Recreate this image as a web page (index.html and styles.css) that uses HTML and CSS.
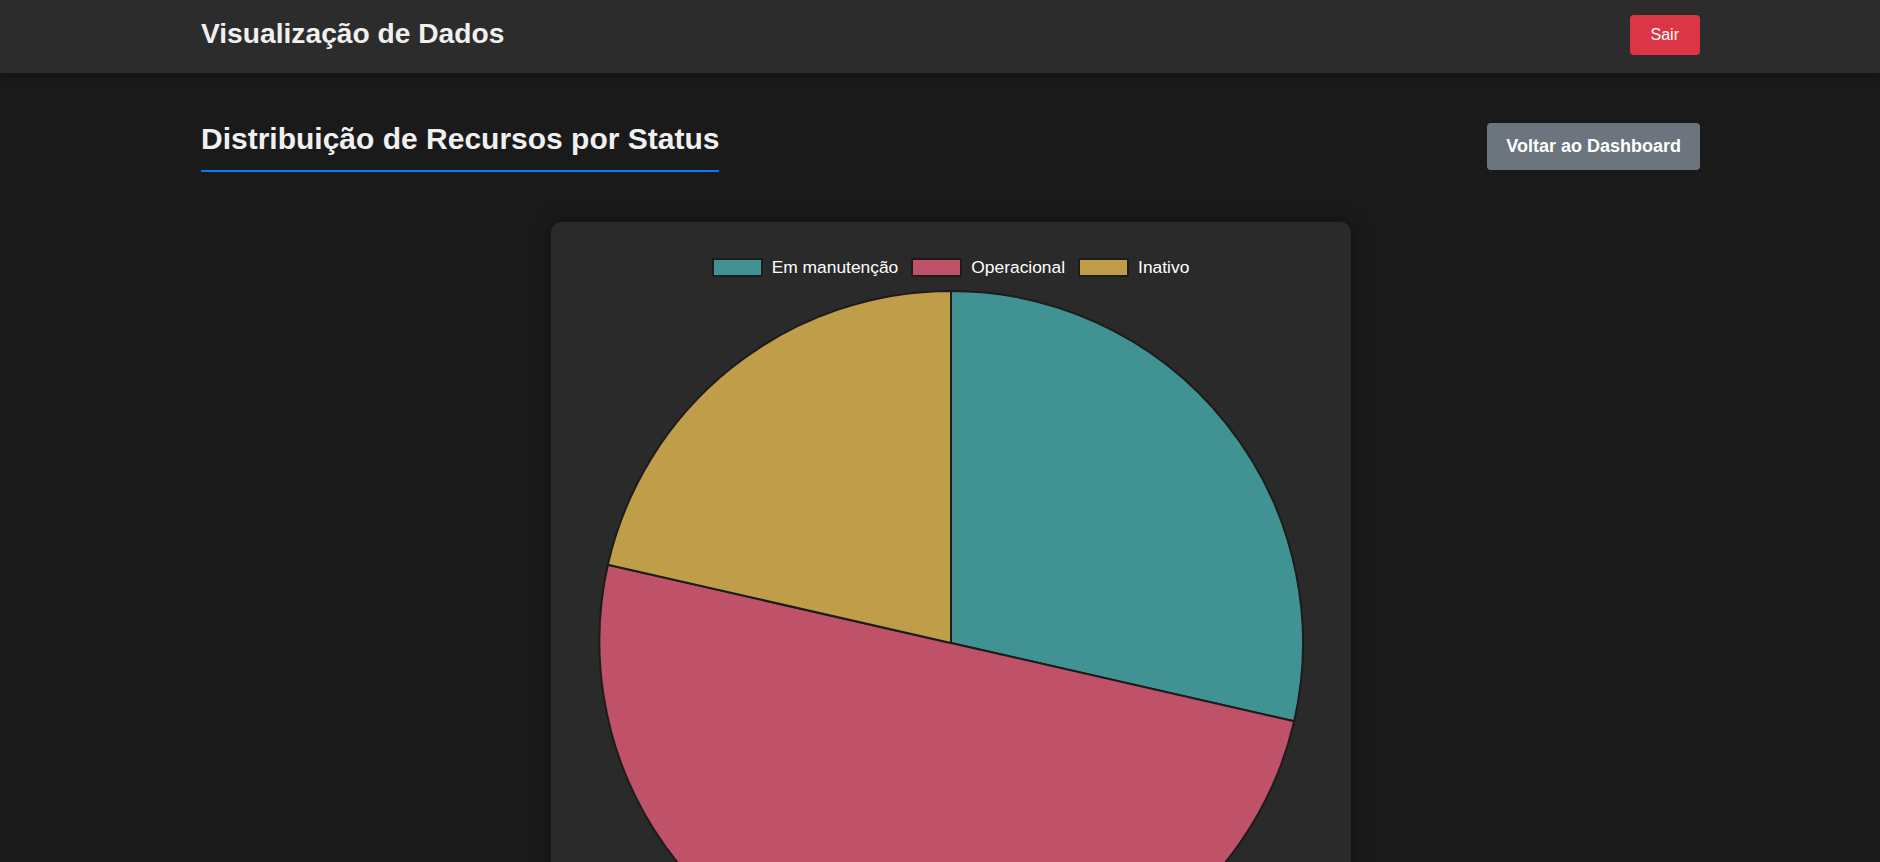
FILE: index.html
```html
<!DOCTYPE html>
<html lang="pt-BR">
<head>
<meta charset="utf-8">
<title>Visualização de Dados</title>
<link rel="stylesheet" href="styles.css">
</head>
<body>
<header class="topbar">
  <div class="container topbar-inner">
    <h1 class="brand">Visualização de Dados</h1>
    <button class="btn btn-danger">Sair</button>
  </div>
</header>
<main class="container main">
  <div class="title-row">
    <h2 class="page-title">Distribuição de Recursos por Status</h2>
    <button class="btn btn-secondary">Voltar ao Dashboard</button>
  </div>
  <section class="chart-card">
    <div class="legend">
      <div class="legend-item"><span class="swatch swatch-teal"></span><span class="legend-label">Em manutenção</span></div>
      <div class="legend-item"><span class="swatch swatch-red"></span><span class="legend-label">Operacional</span></div>
      <div class="legend-item"><span class="swatch swatch-yellow"></span><span class="legend-label">Inativo</span></div>
    </div>
    <svg class="pie" width="760" height="720" viewBox="0 0 760 720">
      <path d="M380 358 L380 6 A352 352 0 0 1 723.17 436.33 Z" fill="#419393" stroke="#1c1c1c" stroke-width="2" stroke-linejoin="round"/>
      <path d="M380 358 L723.17 436.33 A352 352 0 0 1 36.83 279.67 Z" fill="#bf5269" stroke="#1c1c1c" stroke-width="2" stroke-linejoin="round"/>
      <path d="M380 358 L36.83 279.67 A352 352 0 0 1 380 6 Z" fill="#bf9d49" stroke="#1c1c1c" stroke-width="2" stroke-linejoin="round"/>
    </svg>
  </section>
</main>
</body>
</html>
```
FILE: styles.css
```css
* { box-sizing: border-box; }

html, body {
  margin: 0;
  padding: 0;
  background: #1a1a1a;
  color: #f0f0f0;
  font-family: "Liberation Sans", Arial, Helvetica, sans-serif;
}

body { overflow: hidden; height: 862px; }

.container {
  max-width: 1520px;
  margin: 0 auto;
  padding-left: 21px;
}

.topbar {
  background: #2c2c2c;
  height: 73px;
  box-shadow: 0 2px 8px rgba(0, 0, 0, 0.35);
  position: relative;
  z-index: 1;
}

.topbar-inner {
  height: 100%;
  display: flex;
  align-items: center;
  justify-content: space-between;
}

.brand {
  margin: 0;
  font-size: 28.2px;
  font-weight: 700;
  color: #f0f0f0;
  line-height: 1;
  padding-bottom: 7px;
}

.btn {
  font-family: "Liberation Sans", Arial, Helvetica, sans-serif;
  border: none;
  border-radius: 4px;
  color: #ffffff;
  cursor: pointer;
}

.btn-danger {
  background: #dc3545;
  font-size: 16px;
  line-height: 18px;
  padding: 11px 21px;
  height: 40px;
  margin-top: -3px;
}

.btn-secondary {
  background: #6c757d;
  font-size: 18px;
  font-weight: 700;
  line-height: 21px;
  padding: 13px 19px;
  height: 47px;
  margin-bottom: 2px;
}

.main {
  padding-top: 49px;
}

.title-row {
  display: flex;
  align-items: center;
  justify-content: space-between;
}

.page-title {
  margin: 0;
  font-size: 30px;
  font-weight: 700;
  color: #f0f0f0;
  line-height: 34px;
  padding-bottom: 14px;
  border-bottom: 2px solid #007bff;
}

.chart-card {
  width: 800px;
  margin: 50px auto 0;
  background: #2a2a2a;
  border-radius: 10px;
  padding: 20px 20px 20px;
  box-shadow: 0 0 18px rgba(0, 0, 0, 0.35);
}

.legend {
  display: flex;
  justify-content: center;
  align-items: center;
  gap: 13px;
  padding-top: 16px;
  height: 35px;
}

.legend-item {
  display: flex;
  align-items: center;
  gap: 9px;
}

.swatch {
  display: block;
  width: 51px;
  height: 19px;
  border: 2px solid #1c1c1c;
}

.swatch-teal { background: #419393; }
.swatch-red { background: #bf5269; }
.swatch-yellow { background: #bf9d49; }

.legend-label {
  font-size: 17.4px;
  color: #ffffff;
  line-height: 19px;
}

.pie {
  display: block;
  margin-top: 8px;
}
```
